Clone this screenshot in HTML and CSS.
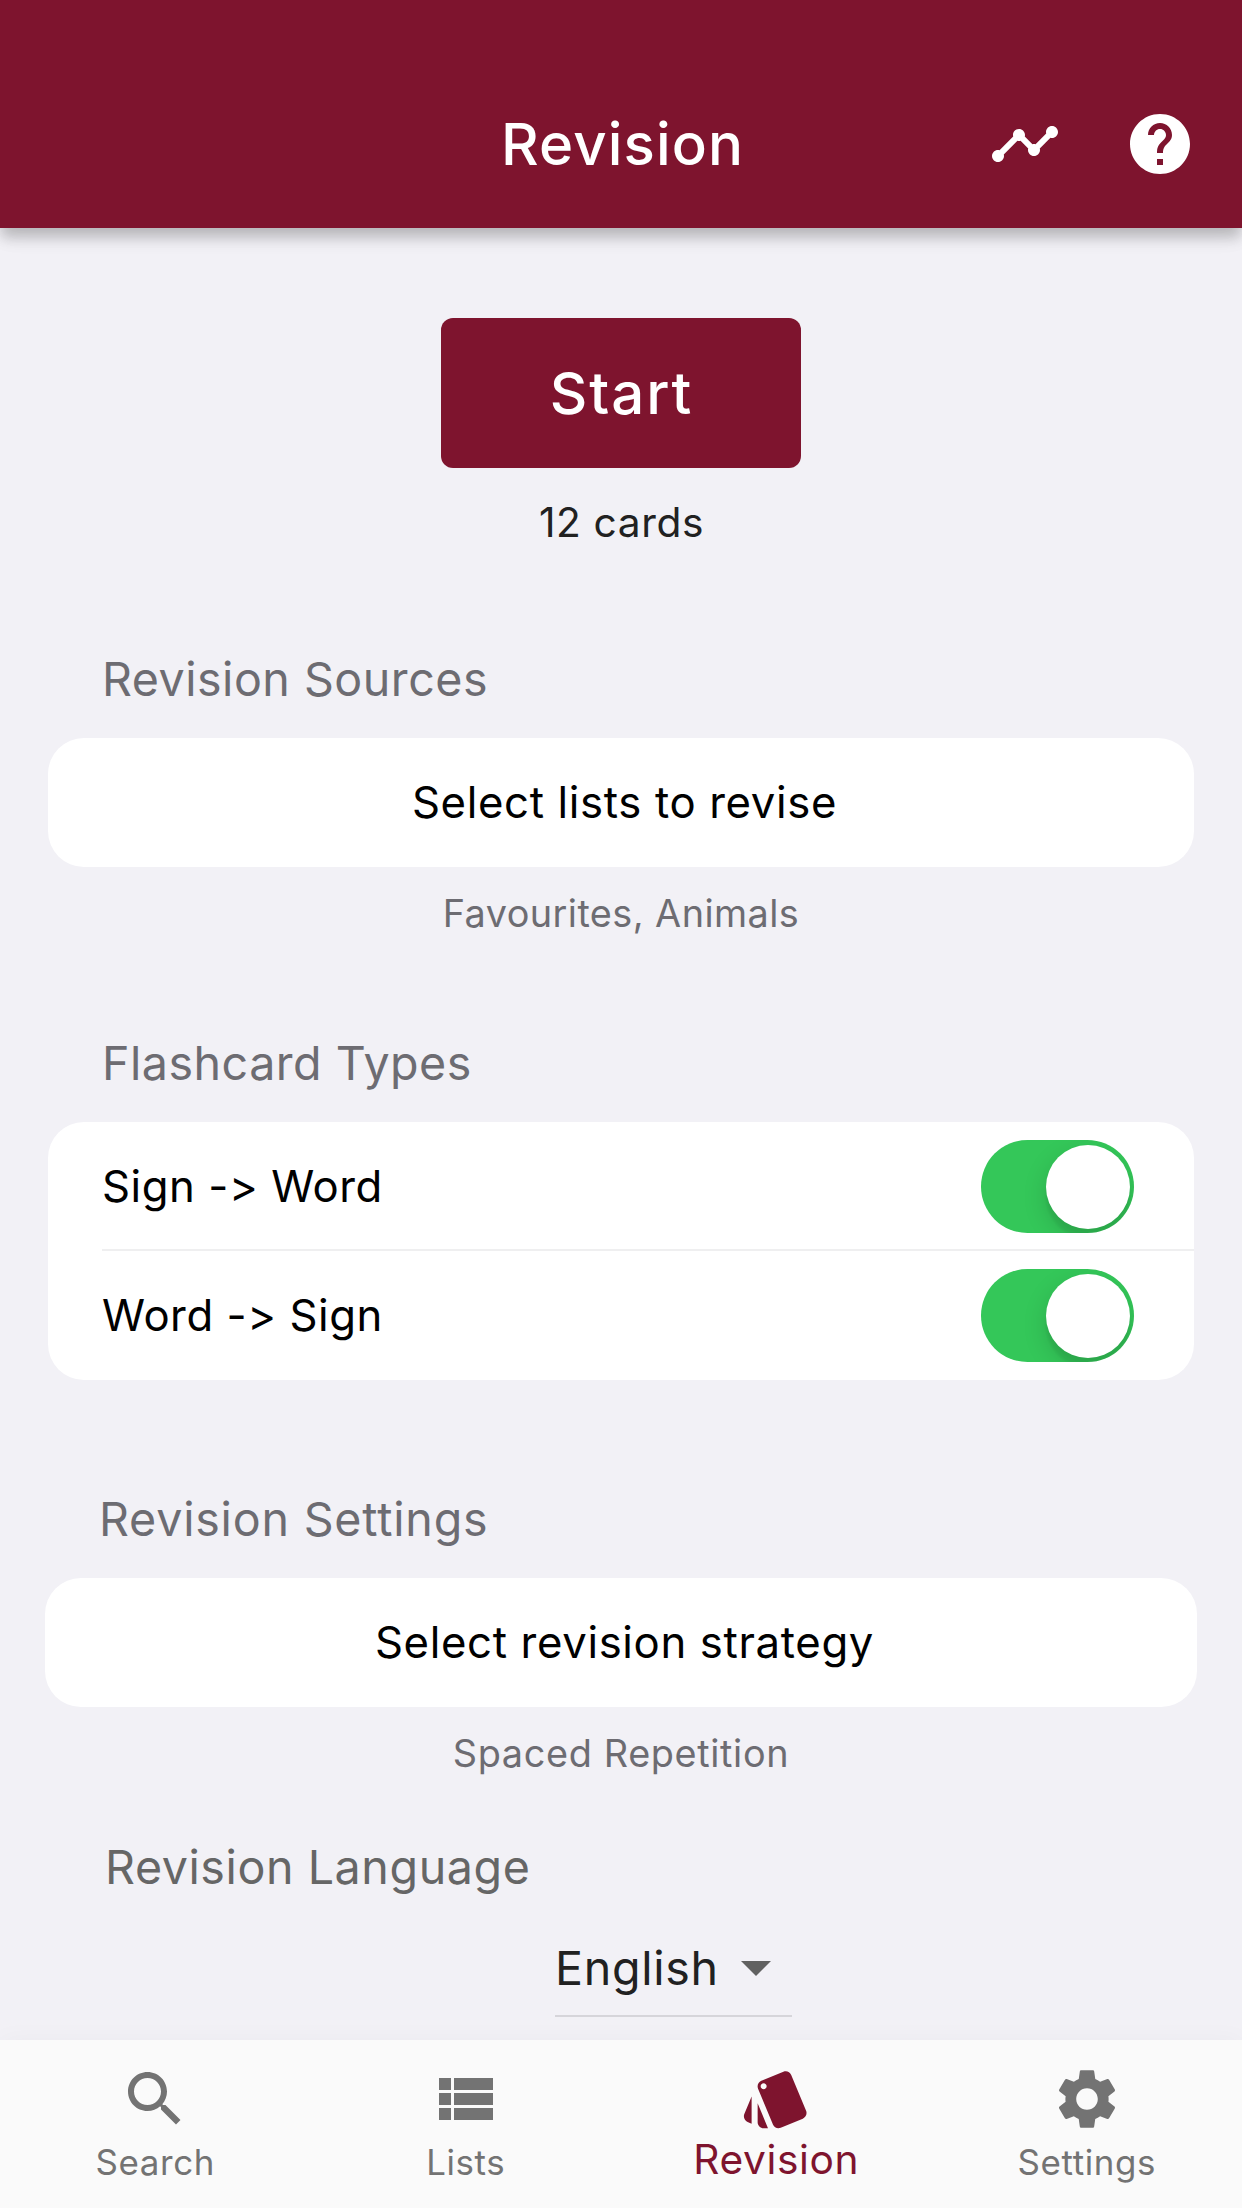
FILE: index.html
```html
<!DOCTYPE html>
<html lang="en">
<head>
<meta charset="utf-8">
<title>Revision</title>
<link rel="stylesheet" href="styles.css">
</head>
<body>
<div class="app">
  <header class="app-bar">
    <h1 class="app-title">Revision</h1>
    <div class="app-actions">
      <svg class="icon" viewBox="0 0 24 24"><path d="M23 8c0 1.100-.9 2-2 2-.18 0-.35-.02-.51-.07l-3.560 3.550c.05.16.07.34.07.52 0 1.100-.9 2-2 2s-2-.9-2-2c0-.18.02-.36.07-.52l-2.550-2.550c-.16.05-.34.07-.52.07s-.36-.02-.52-.07l-4.550 4.560c.05.16.07.33.07.51 0 1.100-.9 2-2 2s-2-.9-2-2 .9-2 2-2c.18 0 .35.02.51.07l4.560-4.550C8.020 9.360 8 9.180 8 9c0-1.100.9-2 2-2s2 .9 2 2c0 .18-.02.36-.07.52l2.550 2.550c.16-.05.34-.07.52-.07s.36.02.52.07l3.550-3.560C19.020 8.350 19 8.180 19 8c0-1.100.9-2 2-2s2 .9 2 2z"/></svg>
      <svg class="icon" viewBox="0 0 24 24"><path d="M12 2C6.480 2 2 6.480 2 12s4.480 10 10 10 10-4.480 10-10S17.520 2 12 2zm1 17h-2v-2h2v2zm2.070-7.750l-.9.920C13.450 12.900 13 13.500 13 15h-2v-.5c0-1.100.45-2.100 1.170-2.830l1.240-1.260c.37-.36.59-.86.59-1.410 0-1.100-.9-2-2-2s-2 .9-2 2H8c0-2.210 1.790-4 4-4s4 1.790 4 4c0 .88-.36 1.680-.93 2.250z"/></svg>
    </div>
  </header>

  <main class="content">
    <button class="start">Start</button>
    <p class="count">12 cards</p>

    <section class="section section-sources">
      <h2 class="heading">Revision Sources</h2>
      <div class="card"><div class="row row-link">Select lists to revise</div></div>
      <p class="caption">Favourites, Animals</p>
    </section>

    <section class="section section-types">
      <h2 class="heading">Flashcard Types</h2>
      <div class="card">
        <div class="row row-toggle"><span class="toggle-label">Sign -&gt; Word</span><span class="switch"><span class="knob"></span></span></div>
        <div class="row row-toggle"><span class="toggle-label">Word -&gt; Sign</span><span class="switch"><span class="knob"></span></span></div>
      </div>
    </section>

    <section class="section section-settings">
      <h2 class="heading">Revision Settings</h2>
      <div class="card"><div class="row row-link">Select revision strategy</div></div>
      <p class="caption caption-strategy">Spaced Repetition</p>
    </section>

    <section class="section section-language">
      <h2 class="heading heading-language">Revision Language</h2>
      <div class="select"><span>English</span><svg class="caret" viewBox="0 0 10 5"><path d="M0 0h10L5 5z"/></svg></div>
    </section>
  </main>

  <nav class="tabs">
    <div class="tab">
      <svg class="icon" viewBox="0 0 24 24"><path d="M15.500 14h-.79l-.28-.27C15.410 12.590 16 11.110 16 9.500 16 5.910 13.090 3 9.500 3S3 5.910 3 9.500 5.910 16 9.500 16c1.610 0 3.090-.59 4.230-1.570l.27.28v.79l5 4.990L20.490 19l-4.990-5zm-6 0C7.010 14 5 11.990 5 9.500S7.010 5 9.500 5 14 7.010 14 9.500 11.990 14 9.500 14z"/></svg>
      <span class="tab-label">Search</span>
    </div>
    <div class="tab">
      <svg class="icon" viewBox="0 0 24 24"><path d="M3 14h4v-4H3v4zm0 5h4v-4H3v4zM3 9h4V5H3v4zm5 5h13v-4H8v4zm0 5h13v-4H8v4zM8 5v4h13V5H8z"/></svg>
      <span class="tab-label">Lists</span>
    </div>
    <div class="tab tab-active">
      <svg class="icon" viewBox="0 0 24 24"><path d="M2.530 19.650l1.340.56v-9.030l-2.430 5.860c-.41 1.020.08 2.190 1.090 2.610zm19.500-3.700L17.070 3.980c-.31-.75-1.040-1.210-1.810-1.230-.26 0-.53.04-.79.15L7.100 5.950c-.75.31-1.210 1.030-1.230 1.800-.01.27.04.54.15.8l4.960 11.970c.31.76 1.050 1.220 1.830 1.230.26 0 .52-.05.77-.15l7.360-3.050c1.020-.42 1.510-1.590 1.090-2.600zM7.880 8.750c-.55 0-1-.45-1-1s.45-1 1-1 1 .45 1 1-.45 1-1 1zm-2 11c0 1.100.9 2 2 2h1.450l-3.450-8.340v6.340z"/></svg>
      <span class="tab-label">Revision</span>
    </div>
    <div class="tab">
      <svg class="icon" viewBox="0 0 24 24"><path d="M19.140 12.940c.04-.3.06-.61.06-.94 0-.32-.02-.64-.07-.94l2.030-1.580c.18-.14.23-.41.12-.61l-1.920-3.320c-.12-.22-.37-.29-.59-.22l-2.390.96c-.5-.38-1.030-.7-1.620-.94L14.400 2.810c-.04-.24-.24-.41-.48-.41h-3.840c-.24 0-.43.17-.47.41L9.250 5.350C8.660 5.590 8.120 5.920 7.630 6.290L5.240 5.330c-.22-.08-.47 0-.59.22L2.740 8.870c-.12.21-.08.47.12.61l2.030 1.580c-.05.3-.09.63-.09.94s.02.64.07.94l-2.030 1.580c-.18.14-.23.41-.12.61l1.920 3.320c.12.22.37.29.59.22l2.390-.96c.5.38 1.030.7 1.620.94l.36 2.540c.05.24.24.41.48.41h3.840c.24 0 .44-.17.47-.41l.36-2.540c.59-.24 1.130-.56 1.620-.94l2.390.96c.22.08.47 0 .59-.22l1.920-3.320c.12-.22.07-.47-.12-.61l-2.010-1.580zM12 15.600c-1.980 0-3.600-1.620-3.600-3.600s1.620-3.600 3.600-3.600 3.600 1.620 3.600 3.600-1.620 3.600-3.600 3.600z"/></svg>
      <span class="tab-label">Settings</span>
    </div>
  </nav>
</div>
</body>
</html>
```
FILE: styles.css
```css
* { box-sizing: border-box; }

body {
  margin: 0;
  background: #f2f1f6;
  font-family: Inter, "Liberation Sans", sans-serif;
  font-variant-ligatures: none;
  font-feature-settings: "calt" 0;
}

h1, h2, p { margin: 0; font-weight: 400; }

.app {
  display: flex;
  flex-direction: column;
  width: 1242px;
  height: 2208px;
  overflow: hidden;
}

.icon { display: block; width: 72px; height: 72px; fill: currentColor; }

/* App bar */
.app-bar {
  position: relative;
  z-index: 1;
  flex: none;
  display: grid;
  grid-template-columns: 1fr auto 1fr;
  align-items: center;
  height: 228px;
  padding: 60px 46px 0;
  background: #7e142e;
  color: #fff;
  box-shadow: 0 10px 12px -2px rgba(0, 0, 0, .16), 0 12px 15px 0 rgba(0, 0, 0, .07), 0 3px 30px 0 rgba(0, 0, 0, .06);
}
.app-title {
  grid-column: 2;
  padding-left: 3px;
  font-size: 58.2px;
  line-height: 72px;
  font-weight: 500;
  letter-spacing: 1.1px;
}
.app-actions { display: flex; justify-content: flex-end; gap: 63px; }

/* Content */
.content { flex: 1; min-height: 0; padding-top: 90px; }

.start {
  display: block;
  width: 360px;
  height: 150px;
  margin: 0 auto;
  padding: 0 0 0 1px;
  border: 0;
  border-radius: 12px;
  background: #7e142e;
  color: #fff;
  font: 500 58.2px/150px Inter, "Liberation Sans", sans-serif;
  letter-spacing: 1.9px;
}
.count {
  padding-left: 1px;
  color: #212121;
  font-size: 40.7px;
  line-height: 109px;
  letter-spacing: .6px;
  text-align: center;
}

.section { padding: 0 48px; }
.section-sources { margin-top: 72px; }
.section-types { margin-top: 95px; }
.section-settings { margin-top: 109px; padding: 0 45px; }
.section-language { margin-top: 59px; }

.heading {
  margin-bottom: 29px;
  padding-left: 54px;
  color: #6d6c72;
  font-size: 46.6px;
  line-height: 60px;
  letter-spacing: .5px;
}
.section-settings .heading { letter-spacing: .8px; }
.heading-language { margin-bottom: 24px; padding-left: 57px; color: #666; letter-spacing: .58px; }

.card { border-radius: 36px; background: #fff; overflow: hidden; }
.row {
  height: 129px;
  color: #000;
  font-size: 43.7px;
  line-height: 129px;
  letter-spacing: .65px;
}
.row-link { padding-left: 7px; text-align: center; }
.row-toggle {
  display: flex;
  align-items: center;
  justify-content: space-between;
  margin-left: 54px;
  padding-right: 60px;
  letter-spacing: .55px;
}
.row-toggle + .row-toggle { box-shadow: 0 -2px 0 #efeff0; }

.switch {
  display: flex;
  justify-content: flex-end;
  width: 153px;
  height: 93px;
  padding: 4.5px;
  border-radius: 47px;
  background: #34c759;
  overflow: hidden;
}
.knob {
  width: 84px;
  height: 84px;
  border-radius: 50%;
  background: #fff;
  box-shadow: 0 9px 24px rgba(0, 0, 0, .15), 0 9px 3px rgba(0, 0, 0, .06);
}

.caption {
  margin-top: 21px;
  color: #6d6c72;
  font-size: 37.8px;
  line-height: 50px;
  letter-spacing: .44px;
  text-align: center;
}
.caption-strategy { letter-spacing: .65px; }

.select {
  display: flex;
  align-items: center;
  justify-content: space-between;
  width: 237px;
  height: 96px;
  margin-left: 507px;
  padding-right: 21px;
  border-bottom: 2px solid #d6d5da;
  color: #212121;
  font-size: 46.6px;
  letter-spacing: .7px;
}
.caret { width: 30px; height: 15px; fill: #616161; }

/* Bottom navigation */
.tabs {
  position: relative;
  flex: none;
  display: grid;
  grid-template-columns: repeat(4, 1fr);
  height: 168px;
  background: #fafafa;
  box-shadow: 0 0 24px rgba(0, 0, 0, .035);
}
.tab {
  display: flex;
  flex-direction: column;
  align-items: center;
  padding-top: 23px;
  color: #737373;
}
.tab-label { margin-top: 2px; font-size: 34.9px; line-height: 50px; letter-spacing: .6px; }
.tab-active { color: #7e142e; }
.tab-active .tab-label { margin-top: 0; font-size: 40.7px; }
```
